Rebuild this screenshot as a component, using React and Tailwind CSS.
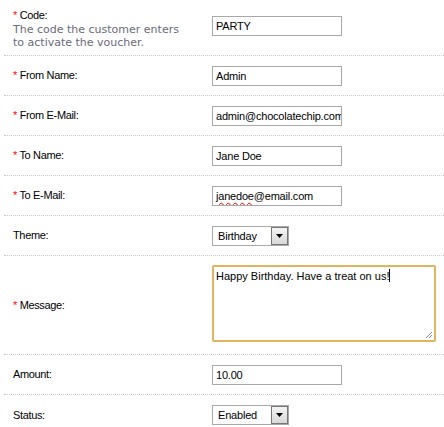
import React from 'react';

const rows = [
  { key: 'from_name', label: 'From Name:', required: true, value: 'Admin' },
  { key: 'from_email', label: 'From E-Mail:', required: true, value: 'admin@chocolatechip.com' },
  { key: 'to_name', label: 'To Name:', required: true, value: 'Jane Doe' },
  { key: 'to_email', label: 'To E-Mail:', required: true, value: 'janedoe@email.com', misspelled: 'janedoe' },
];

const Label = ({ required, children }) => (
  <div className="w-[208px] shrink-0 pl-[9px] text-[11px] tracking-[-0.35px] text-black">
    {required && <span className="text-[#ff0000]">* </span>}
    {children}
  </div>
);

const Field = ({ value, misspelled }) => (
  <div className="w-[130px] h-[20px] border border-[#a9a9a9] bg-white pl-[3px] text-[11px] tracking-[-0.2px] leading-[18px] text-black overflow-hidden whitespace-nowrap">
    {misspelled ? (
      <>
        <span className="underline decoration-wavy decoration-[#e00] decoration-1 underline-offset-2">{misspelled}</span>
        {value.slice(misspelled.length)}
      </>
    ) : (
      value
    )}
  </div>
);

const Select = ({ value }) => (
  <div className="flex w-[77px] h-[20px] border border-[#a9a9a9] bg-white text-[11px] tracking-[-0.2px] leading-[18px] text-black">
    <div className="flex-1 pl-[5px]">{value}</div>
    <div className="w-[17px] h-[18px] border border-[#777] bg-gradient-to-b from-[#f4f4f4] to-[#d8d8d8] flex items-center justify-center">
      <svg width="7" height="4" viewBox="0 0 7 4">
        <path d="M0 0h7L3.5 4z" fill="#000" />
      </svg>
    </div>
  </div>
);

const Row = ({ children, h = 'h-[40px]', last }) => (
  <div className={`flex items-center ${h} ${last ? '' : 'border-b border-dotted border-[#c8c8c8]'}`}>{children}</div>
);

export default function App() {
  return (
    <div className="bg-white w-[444px] h-[427px] overflow-hidden pl-[4px]" style={{ fontFamily: '"Liberation Sans", Arial, sans-serif' }}>
      <Row h="h-[56px]">
        <div className="w-[208px] shrink-0 pl-[9px] pt-[2px] text-[11px] text-black">
          <div className="leading-[14px] tracking-[-0.35px]">
            <span className="text-[#ff0000]">* </span>Code:
          </div>
          <div
            className="mt-[1px] text-[11px] leading-[13px] text-[#6a6a78]"
            style={{ fontFamily: '"DejaVu Sans", Verdana, sans-serif' }}
          >
            The code the customer enters
            <br />
            to activate the voucher.
          </div>
        </div>
        <div className="-mt-[4px]">
          <Field value="PARTY" />
        </div>
      </Row>
      {rows.map((r) => (
        <Row key={r.key}>
          <Label required={r.required}>{r.label}</Label>
          <Field value={r.value} misspelled={r.misspelled} />
        </Row>
      ))}
      <Row>
        <Label>Theme:</Label>
        <Select value="Birthday" />
      </Row>
      <Row h="h-[99px]">
        <Label required>Message:</Label>
        <div className="relative -mt-[4px] w-[224px] h-[77px] border-2 border-[#e2b25c] rounded-[2px] bg-white px-[2px] pt-[2px] text-[11px] leading-[15px] text-black">
          Happy Birthday. Have a treat on us!
          <span className="inline-block w-px h-[13px] bg-black align-middle -mt-[2px]" />
          <svg className="absolute right-[1px] bottom-[1px]" width="8" height="8" viewBox="0 0 8 8">
            <path d="M7 1L1 7M7 4L4 7" stroke="#888" strokeWidth="1" />
          </svg>
        </div>
      </Row>
      <Row>
        <Label>Amount:</Label>
        <Field value="10.00" />
      </Row>
      <Row last>
        <Label>Status:</Label>
        <Select value="Enabled" />
      </Row>
    </div>
  );
}
